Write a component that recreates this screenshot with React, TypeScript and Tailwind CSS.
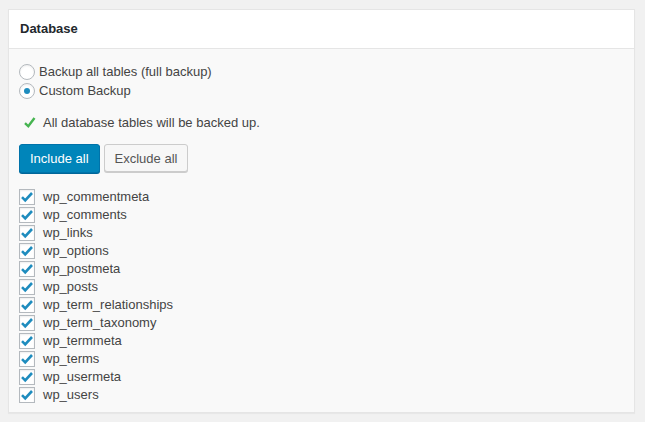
import React from 'react';

const tables = [
  'wp_commentmeta',
  'wp_comments',
  'wp_links',
  'wp_options',
  'wp_postmeta',
  'wp_posts',
  'wp_term_relationships',
  'wp_term_taxonomy',
  'wp_termmeta',
  'wp_terms',
  'wp_usermeta',
  'wp_users',
];

const Radio = ({ checked, label }: { checked?: boolean; label: string }) => (
  <label className="flex items-center h-[19px]">
    <span className="w-4 h-4 rounded-full border border-[#b4b9be] bg-white shadow-[inset_0_1px_2px_rgba(0,0,0,0.07)] flex items-center justify-center">
      {checked && <span className="w-[6px] h-[6px] rounded-full bg-[#1e8cbe]" />}
    </span>
    <span className="ml-1">{label}</span>
  </label>
);

const Checkbox = ({ label }: { label: string }) => (
  <label className="flex items-center h-[18px]">
    <span className="w-4 h-4 border border-[#b4b9be] bg-white shadow-[inset_0_1px_2px_rgba(0,0,0,0.07)] flex items-center justify-center">
      <svg viewBox="0 0 16 16" className="w-[16px] h-[16px] shrink-0">
        <path d="M3 8.2l3.2 3.2L13 4" fill="none" stroke="#1e8cbe" strokeWidth="2.6" strokeLinejoin="miter" />
      </svg>
    </span>
    <span className="ml-2">{label}</span>
  </label>
);

export default function App() {
  return (
    <div className="min-h-screen w-full bg-[#f1f1f1] pt-[9px] pl-[8px] text-[13px] text-[#444] font-['Liberation_Sans',Arial,sans-serif]">
      <div className="w-[627px] h-[404px] border border-[#e5e5e5] bg-[#f9f9f9] shadow-[0_1px_1px_rgba(0,0,0,0.04)]">
        <div className="h-[39px] bg-white border-b border-[#e5e5e5] flex items-center px-[11px]">
          <h2 className="text-[13px] font-bold text-[#23282d]">Database</h2>
        </div>
        <div className="px-[10px] pt-[13px]">
          <Radio label="Backup all tables (full backup)" />
          <Radio checked label="Custom Backup" />
          <div className="flex items-center h-[20px] mt-[13px]">
            <svg viewBox="0 0 20 20" className="w-[20px] h-[20px]">
              <path d="M6 10.2l3.3 3.1L15.5 5" fill="none" stroke="#46b450" strokeWidth="2.4" />
            </svg>
            <span className="ml-[4px]">All database tables will be backed up.</span>
          </div>
          <div className="flex gap-[4px] mt-[11px]">
            <button className="h-[29px] px-[10px] rounded-[3px] bg-[#0085ba] border border-[#0073aa] text-white shadow-[0_1px_0_#006799] leading-none">
              Include all
            </button>
            <button className="h-[28px] px-[10px] rounded-[3px] bg-[#f7f7f7] border border-[#cccccc] text-[#555] shadow-[0_1px_0_#cccccc] leading-none">
              Exclude all
            </button>
          </div>
          <div className="mt-[15px] flex flex-col">
            {tables.map((t) => (
              <Checkbox key={t} label={t} />
            ))}
          </div>
        </div>
      </div>
    </div>
  );
}
